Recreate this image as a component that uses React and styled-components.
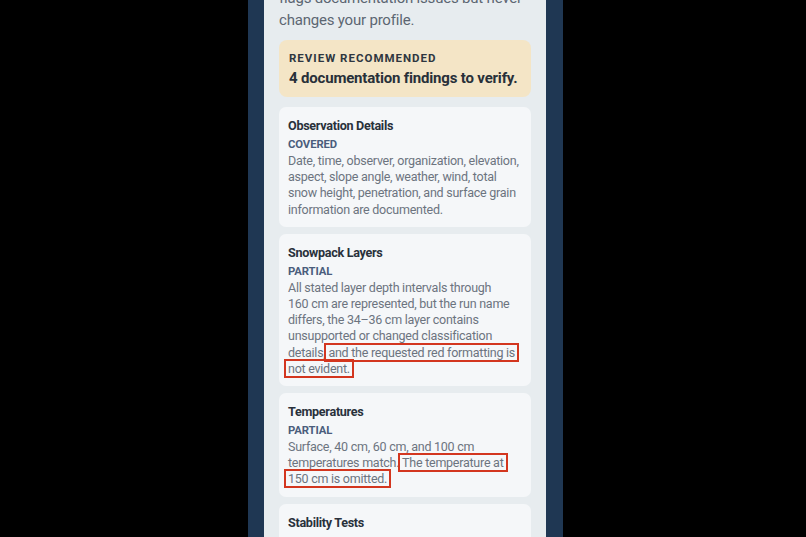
import React from "react";
import styled, { createGlobalStyle } from "styled-components";

const Global = createGlobalStyle`
  html, body { margin: 0; padding: 0; background: #000; }
  body { font-family: Roboto, "Noto Sans", "Liberation Sans", sans-serif; }
  * { box-sizing: border-box; }
`;

const Stage = styled.div`
  display: flex;
  justify-content: center;
  height: 537px;
  padding-left: 5px;
  overflow: hidden;
  background: #000;
`;

const Frame = styled.div`
  width: 315px;
  height: 100%;
  padding: 0 17px 0 16px;
  background: #1f3753;
`;

const Screen = styled.div`
  height: 100%;
  overflow: hidden;
  background: #e7ecef;
`;

const Content = styled.div`
  margin-top: -13px;
  padding: 0 15px;
  display: flex;
  flex-direction: column;
`;

const Intro = styled.p`
  margin: 0 0 9px;
  font-size: 15px;
  line-height: 22px;
  letter-spacing: -0.2px;
  color: #5c6672;
`;

const Banner = styled.div`
  background: #f4e5c6;
  border-radius: 8px;
  padding: 10px 10px 9px;
  margin-bottom: 10px;
`;

const BannerLabel = styled.div`
  font-size: 11.5px;
  line-height: 16px;
  font-weight: 700;
  letter-spacing: 1px;
  color: #2e3640;
  margin-bottom: 2px;
`;

const BannerText = styled.div`
  font-size: 15px;
  line-height: 20px;
  font-weight: 700;
  letter-spacing: -0.18px;
  color: #283039;
`;

const List = styled.div`
  display: flex;
  flex-direction: column;
  gap: 7px;
`;

const Card = styled.section`
  background: #f5f7f9;
  border-radius: 7px;
  padding: 10px 9px 9px;
`;

const Title = styled.h3`
  margin: 0;
  font-size: 12.6px;
  line-height: 18px;
  font-weight: 700;
  letter-spacing: -0.3px;
  color: #29313b;
`;

const Status = styled.div`
  margin-top: 2px;
  font-size: 11.3px;
  line-height: 16px;
  font-weight: 700;
  letter-spacing: -0.1px;
  color: #4a5d7c;
`;

const Body = styled.p`
  margin: 0;
  font-size: 12.5px;
  line-height: 16.2px;
  letter-spacing: -0.25px;
  color: #6c747f;
`;

const Flag = styled.span`
  padding: 0 2px;
  margin: 0 -2px;
  box-shadow: 0 0 0 2px #d3361f;
  -webkit-box-decoration-break: clone;
  box-decoration-break: clone;
`;

const sections = [
  {
    title: "Observation Details",
    status: "COVERED",
    body: [
      "Date, time, observer, organization, elevation, aspect, slope angle, weather, wind, total snow height, penetration, and surface grain information are documented.",
    ],
  },
  {
    title: "Snowpack Layers",
    status: "PARTIAL",
    body: [
      "All stated layer depth intervals through 160\u00a0cm are represented, but the run name differs, the 34\u201336\u00a0cm layer contains unsupported or changed classification details,",
      { flag: "and the requested red formatting is not evident." },
    ],
  },
  {
    title: "Temperatures",
    status: "PARTIAL",
    body: [
      "Surface, 40\u00a0cm, 60\u00a0cm, and 100\u00a0cm temperatures match.",
      { flag: "The temperature at 150\u00a0cm is omitted." },
    ],
  },
  {
    title: "Stability Tests",
    status: "COVERED",
    body: [
      "Extended column tests and compression tests are recorded with scores, depths, and fracture character.",
    ],
  },
];

export default function App() {
  return (
    <>
      <Global />
      <Stage>
        <Frame>
          <Screen>
            <Content>
              <Intro>
                flags documentation issues but never changes your profile.
              </Intro>
              <Banner>
                <BannerLabel>REVIEW RECOMMENDED</BannerLabel>
                <BannerText>4 documentation findings to verify.</BannerText>
              </Banner>
              <List>
                {sections.map((s) => (
                  <Card key={s.title}>
                    <Title>{s.title}</Title>
                    <Status>{s.status}</Status>
                    <Body>
                      {s.body.map((part, i) =>
                        typeof part === "string" ? (
                          <React.Fragment key={i}>{part}</React.Fragment>
                        ) : (
                          <React.Fragment key={i}>
                            {" "}
                            <Flag>{part.flag}</Flag>
                          </React.Fragment>
                        )
                      )}
                    </Body>
                  </Card>
                ))}
              </List>
            </Content>
          </Screen>
        </Frame>
      </Stage>
    </>
  );
}
